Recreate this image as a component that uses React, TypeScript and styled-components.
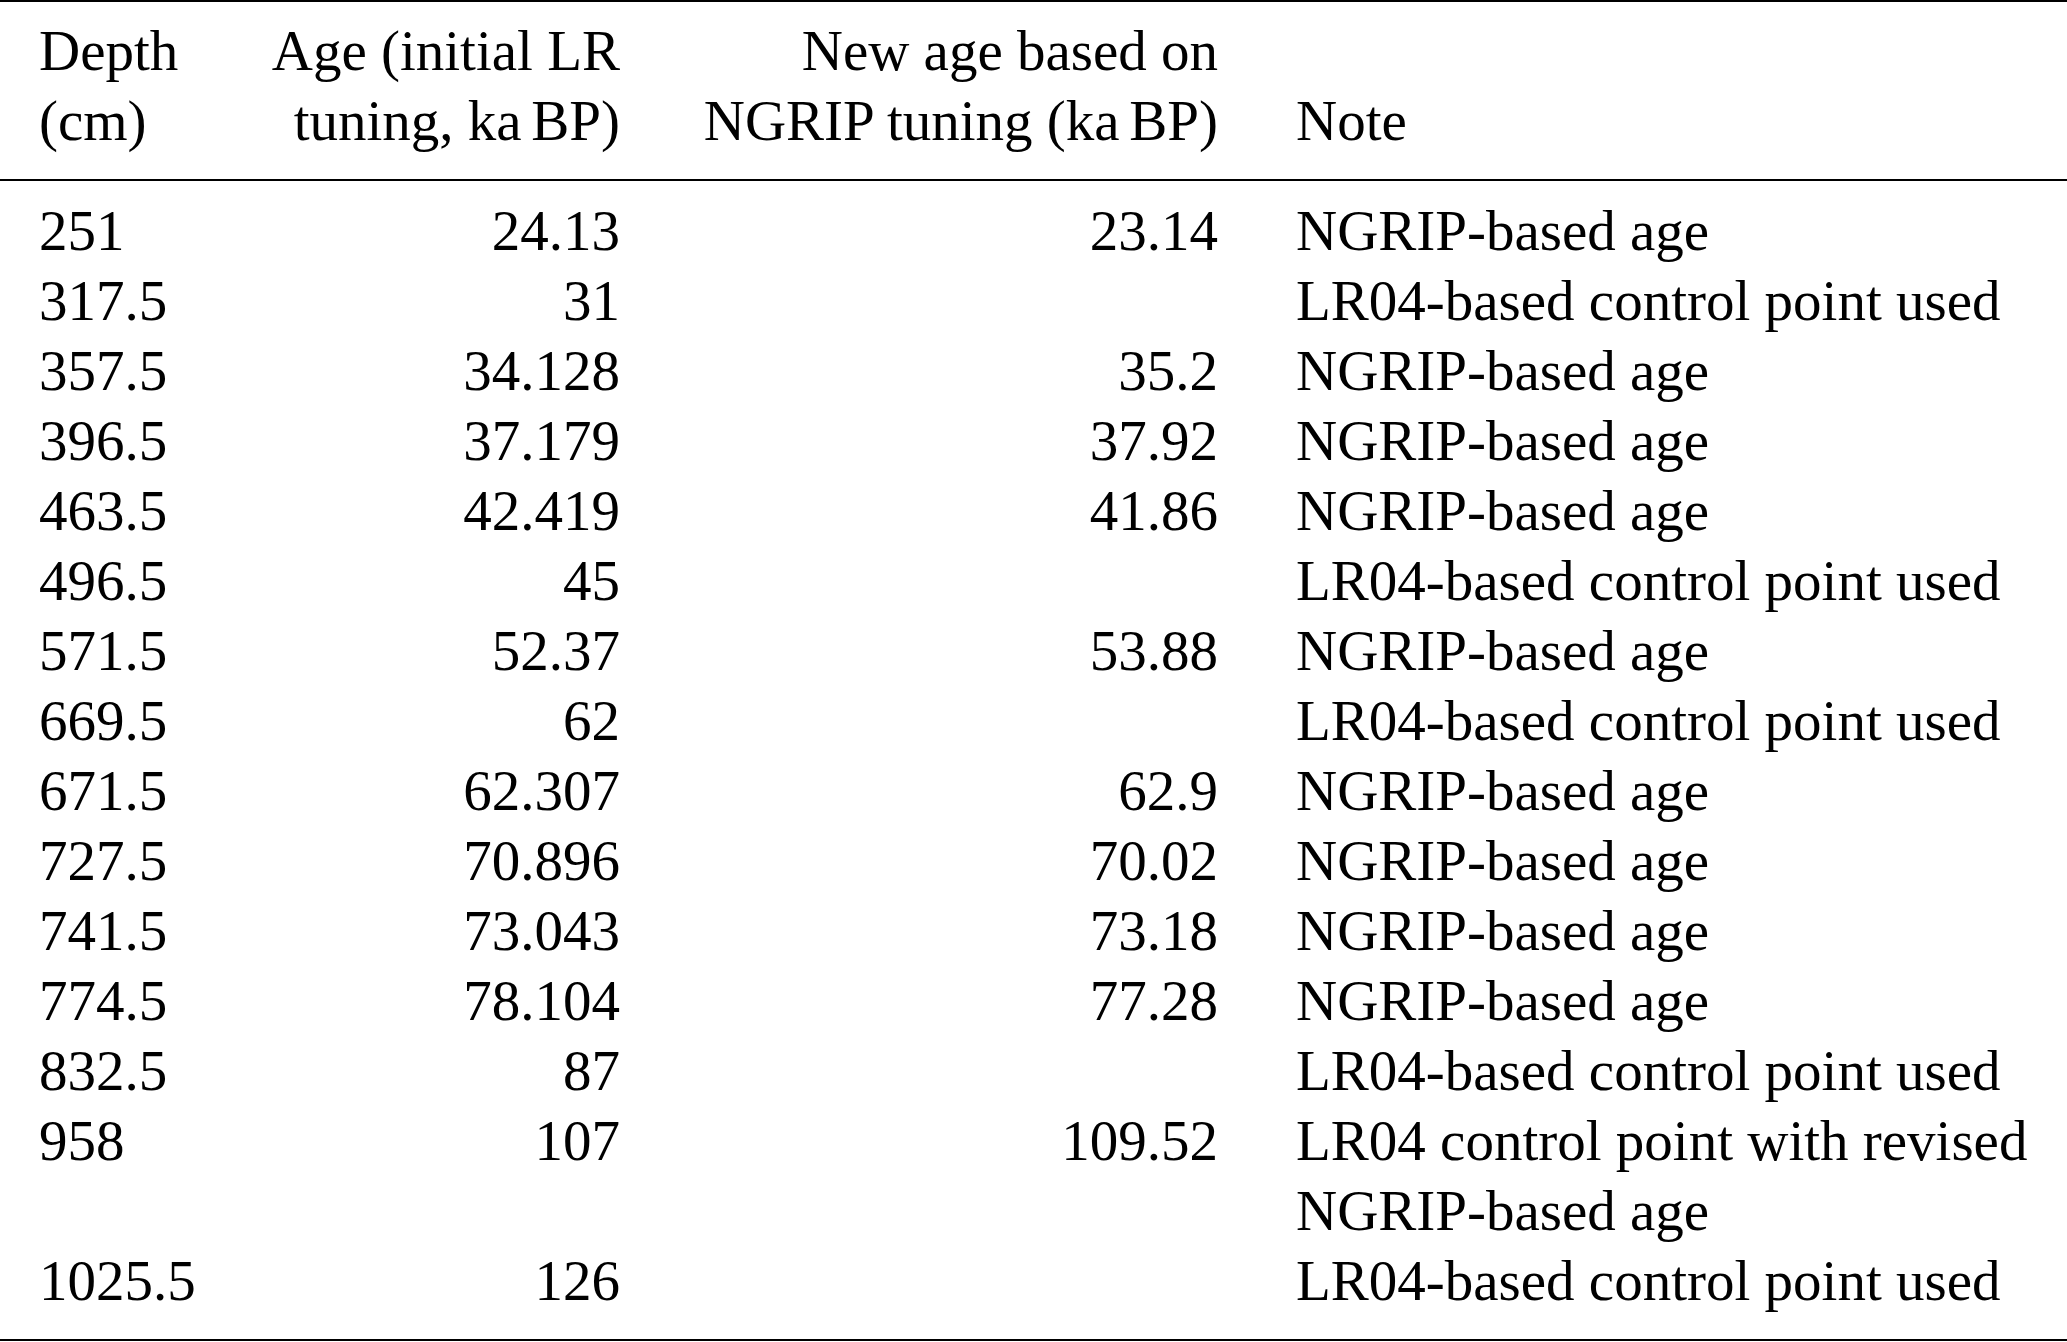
import React from "react";
import styled, { createGlobalStyle } from "styled-components";

const GlobalStyle = createGlobalStyle`
  html, body {
    margin: 0;
    padding: 0;
    background: #ffffff;
  }
  body {
    font-family: "Liberation Serif", "Times New Roman", serif;
    color: #000000;
  }
`;

const Table = styled.div`
  width: 100%;
  box-sizing: border-box;
  border-top: 2px solid #000;
  border-bottom: 2px solid #000;
  font-family: "Liberation Serif", "Times New Roman", serif;
  font-size: 57px;
  line-height: 70px;
  color: #000;
`;

const Grid = styled.div`
  display: grid;
  grid-template-columns: 200px 420px 598px 1fr;
`;

const HeaderRow = styled(Grid)`
  padding: 14px 0 23px;
  border-bottom: 2px solid #000;
  align-items: end;
`;

const Body = styled.div`
  padding: 15px 0 23px;
`;

const Row = styled(Grid)`
  align-items: start;
`;

const Cell = styled.div<{ $align?: "left" | "right"; $first?: boolean; $note?: boolean }>`
  text-align: ${(p) => p.$align ?? "left"};
  padding-left: ${(p) => (p.$first ? "39px" : p.$note ? "78px" : "0")};
  white-space: nowrap;
`;

const ThinSpace = styled.span`
  display: inline-block;
  width: 0.17em;
`;

type Entry = { depth: string; age: string; newAge: string; note: React.ReactNode };

const NG = "NGRIP-based age";
const LR = "LR04-based control point used";

const rows: Entry[] = [
  { depth: "251", age: "24.13", newAge: "23.14", note: NG },
  { depth: "317.5", age: "31", newAge: "", note: LR },
  { depth: "357.5", age: "34.128", newAge: "35.2", note: NG },
  { depth: "396.5", age: "37.179", newAge: "37.92", note: NG },
  { depth: "463.5", age: "42.419", newAge: "41.86", note: NG },
  { depth: "496.5", age: "45", newAge: "", note: LR },
  { depth: "571.5", age: "52.37", newAge: "53.88", note: NG },
  { depth: "669.5", age: "62", newAge: "", note: LR },
  { depth: "671.5", age: "62.307", newAge: "62.9", note: NG },
  { depth: "727.5", age: "70.896", newAge: "70.02", note: NG },
  { depth: "741.5", age: "73.043", newAge: "73.18", note: NG },
  { depth: "774.5", age: "78.104", newAge: "77.28", note: NG },
  { depth: "832.5", age: "87", newAge: "", note: LR },
  {
    depth: "958",
    age: "107",
    newAge: "109.52",
    note: (
      <>
        LR04 control point with revised
        <br />
        NGRIP-based age
      </>
    ),
  },
  { depth: "1025.5", age: "126", newAge: "", note: LR },
];

export default function App() {
  return (
    <>
      <GlobalStyle />
      <Table>
        <HeaderRow>
          <Cell $first>
            Depth
            <br />
            (cm)
          </Cell>
          <Cell $align="right">
            Age (initial LR
            <br />
            tuning, ka
            <ThinSpace />
            BP)
          </Cell>
          <Cell $align="right">
            New age based on
            <br />
            NGRIP tuning (ka
            <ThinSpace />
            BP)
          </Cell>
          <Cell $note>Note</Cell>
        </HeaderRow>
        <Body>
          {rows.map((r) => (
            <Row key={r.depth}>
              <Cell $first>{r.depth}</Cell>
              <Cell $align="right">{r.age}</Cell>
              <Cell $align="right">{r.newAge}</Cell>
              <Cell $note>{r.note}</Cell>
            </Row>
          ))}
        </Body>
      </Table>
    </>
  );
}
